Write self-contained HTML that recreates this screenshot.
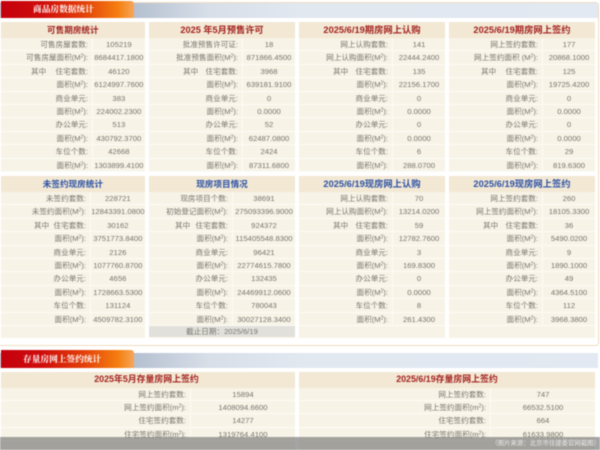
<!DOCTYPE html>
<html lang="zh">
<head>
<meta charset="utf-8">
<style>
html,body{margin:0;padding:0;width:600px;height:450px;overflow:hidden;background:#fff}
#w{position:absolute;left:0;top:0;width:600px;height:450px;overflow:hidden;filter:blur(.45px);font-family:"Liberation Sans","Noto Sans CJK SC",sans-serif;font-size:7.6px;color:#77746d;background:#fff}
.box{position:absolute;left:-4px;top:2px;width:601px;height:342px;border:1px solid #f0dcc0;border-radius:3px;background:#fff}
.box2{position:absolute;left:-4px;top:352px;width:601px;height:120px;background:#fff}
.sb{position:absolute;left:0;width:598px;height:15px;background:linear-gradient(90deg,#b4c0d0 134px,#d8dfe9 210px,#e2e8f0 300px,#e3e9f2)}
.sh{position:absolute;left:1px;width:133px;height:17px;border-radius:0 3px 0 0;background:linear-gradient(90deg,#c4000e 0,#cf0c0c 30%,#e2400a 62%,#f57f10 88%,#f6a65a 100%);color:#fff;font-weight:bold;font-family:"Liberation Serif","Noto Serif CJK SC",serif;font-size:8.7px;line-height:17px}
.p{position:absolute;width:146px;background:#f7f3e7}
.h{height:16px;line-height:16px;background:#f2e8d4;text-align:center;font-weight:bold;font-size:8.6px;color:#a4221f}
.b .h{color:#2c51a3}
.r{position:relative;display:flex;height:13.4px;line-height:13px;box-sizing:border-box;border-bottom:1px solid #fdfbf4}
.l{box-sizing:border-box;padding-right:4px;text-align:right;white-space:nowrap;border-right:1px solid #fdfbf4;flex:none}
.v{flex:1;text-align:center;white-space:nowrap;font-size:7.7px}
.a .l{width:94px}.c .l{width:90px}.d .l{width:84px}
.q{position:absolute;top:0}
sup{font-size:5px;line-height:0;vertical-align:2.5px}
.e{height:11px;line-height:11px;background:#e2e0da;text-align:center;margin-top:0}
.w{width:296px}
.w .h{height:15.5px;line-height:15.5px}
.w .l{width:190px;padding-right:4px}
#o{position:absolute;left:0;top:437px;width:600px;height:13px;background:rgba(110,110,110,.62);color:#e8e8e8;font-size:6.4px;line-height:14px;text-align:right;padding-right:0;box-sizing:border-box}
</style>
</head>
<body>
<div id="w">
<div class="box"></div>
<div class="box2"></div>
<div class="sb" style="top:3px"></div>
<div class="sh" style="top:1px;padding-left:32px;width:101px">商品房数据统计</div>

<div class="p a" style="left:1px;top:22px;width:143.7px;height:150px">
<div class="h">可售期房统计</div>
<div class="r" style="height:13.4px"><div class="l" style="width:92px">可售房屋套数:</div><div class="v">105219</div></div>
<div class="r"><div class="l" style="width:92px">可售房屋面积(M<sup>2</sup>):</div><div class="v">8684417.1800</div></div>
<div class="r"><span class="q" style="left:30px">其中</span><div class="l" style="width:92px">住宅套数:</div><div class="v">46120</div></div>
<div class="r"><div class="l" style="width:92px">面积(M<sup>2</sup>):</div><div class="v">6124997.7600</div></div>
<div class="r"><div class="l" style="width:92px">商业单元:</div><div class="v">383</div></div>
<div class="r"><div class="l" style="width:92px">面积(M<sup>2</sup>):</div><div class="v">224002.2300</div></div>
<div class="r"><div class="l" style="width:92px">办公单元:</div><div class="v">513</div></div>
<div class="r"><div class="l" style="width:92px">面积(M<sup>2</sup>):</div><div class="v">430792.3700</div></div>
<div class="r"><div class="l" style="width:92px">车位个数:</div><div class="v">42668</div></div>
<div class="r"><div class="l" style="width:92px">面积(M<sup>2</sup>):</div><div class="v">1303899.4100</div></div>
</div>

<div class="p a" style="left:149px;top:22px;height:150px">
<div class="h" style="font-size:9.2px">2025 年5月预售许可</div>
<div class="r"><div class="l">批准预售许可证:</div><div class="v">18</div></div>
<div class="r"><div class="l">批准预售面积(M<sup>2</sup>):</div><div class="v">871866.4500</div></div>
<div class="r"><span class="q" style="left:34px">其中</span><div class="l">住宅套数:</div><div class="v">3968</div></div>
<div class="r"><div class="l">面积(M<sup>2</sup>):</div><div class="v">639181.9100</div></div>
<div class="r"><div class="l">商业单元:</div><div class="v">0</div></div>
<div class="r"><div class="l">面积(M<sup>2</sup>):</div><div class="v">0.0000</div></div>
<div class="r"><div class="l">办公单元:</div><div class="v">52</div></div>
<div class="r"><div class="l">面积(M<sup>2</sup>):</div><div class="v">62487.0800</div></div>
<div class="r"><div class="l">车位个数:</div><div class="v">2424</div></div>
<div class="r"><div class="l">面积(M<sup>2</sup>):</div><div class="v">87311.6800</div></div>
</div>

<div class="p a" style="left:299px;top:22px;height:150px">
<div class="h" style="font-size:9.3px">2025/6/19期房网上认购</div>
<div class="r"><div class="l">网上认购套数:</div><div class="v">141</div></div>
<div class="r"><div class="l">网上认购面积(M<sup>2</sup>):</div><div class="v">22444.2400</div></div>
<div class="r"><span class="q" style="left:34px">其中</span><div class="l">住宅套数:</div><div class="v">135</div></div>
<div class="r"><div class="l">面积(M<sup>2</sup>):</div><div class="v">22156.1700</div></div>
<div class="r"><div class="l">商业单元:</div><div class="v">0</div></div>
<div class="r"><div class="l">面积(M<sup>2</sup>):</div><div class="v">0.0000</div></div>
<div class="r"><div class="l">办公单元:</div><div class="v">0</div></div>
<div class="r"><div class="l">面积(M<sup>2</sup>):</div><div class="v">0.0000</div></div>
<div class="r"><div class="l">车位个数:</div><div class="v">6</div></div>
<div class="r"><div class="l">面积(M<sup>2</sup>):</div><div class="v">288.0700</div></div>
</div>

<div class="p a" style="left:449px;top:22px;height:150px">
<div class="h" style="font-size:9.3px">2025/6/19期房网上签约</div>
<div class="r"><div class="l">网上签约套数:</div><div class="v">177</div></div>
<div class="r"><div class="l">网上签约面积 (M<sup>2</sup>):</div><div class="v">20868.1000</div></div>
<div class="r"><span class="q" style="left:32px">其中</span><div class="l">住宅套数:</div><div class="v">125</div></div>
<div class="r"><div class="l">面积(M<sup>2</sup>):</div><div class="v">19725.4200</div></div>
<div class="r"><div class="l">商业单元:</div><div class="v">0</div></div>
<div class="r"><div class="l">面积(M<sup>2</sup>):</div><div class="v">0.0000</div></div>
<div class="r"><div class="l">办公单元:</div><div class="v">0</div></div>
<div class="r"><div class="l">面积(M<sup>2</sup>):</div><div class="v">0.0000</div></div>
<div class="r"><div class="l">车位个数:</div><div class="v">29</div></div>
<div class="r"><div class="l">面积(M<sup>2</sup>):</div><div class="v">819.6300</div></div>
</div>

<div class="p c b" style="left:1px;top:176px;width:143.7px;height:162px">
<div class="h">未签约现房统计</div>
<div class="r"><div class="l">未签约套数:</div><div class="v">228721</div></div>
<div class="r"><div class="l">未签约面积(M<sup>2</sup>):</div><div class="v">12843391.0800</div></div>
<div class="r"><span class="q" style="left:33px">其中</span><div class="l">住宅套数:</div><div class="v">30162</div></div>
<div class="r"><div class="l">面积(M<sup>2</sup>):</div><div class="v">3751773.8400</div></div>
<div class="r"><div class="l">商业单元:</div><div class="v">2126</div></div>
<div class="r"><div class="l">面积(M<sup>2</sup>):</div><div class="v">1077760.8700</div></div>
<div class="r"><div class="l">办公单元:</div><div class="v">4656</div></div>
<div class="r"><div class="l">面积(M<sup>2</sup>):</div><div class="v">1728663.5300</div></div>
<div class="r"><div class="l">车位个数:</div><div class="v">131124</div></div>
<div class="r"><div class="l">面积(M<sup>2</sup>):</div><div class="v">4509782.3100</div></div>
</div>

<div class="p d b" style="left:149px;top:176px;height:162px">
<div class="h">现房项目情况</div>
<div class="r"><div class="l">现房项目个数:</div><div class="v">38691</div></div>
<div class="r"><div class="l">初始登记面积(M<sup>2</sup>):</div><div class="v">275093396.9000</div></div>
<div class="r"><span class="q" style="left:26px">其中</span><div class="l">住宅套数:</div><div class="v">924372</div></div>
<div class="r"><div class="l">面积(M<sup>2</sup>):</div><div class="v">115405548.8300</div></div>
<div class="r"><div class="l">商业单元:</div><div class="v">96421</div></div>
<div class="r"><div class="l">面积(M<sup>2</sup>):</div><div class="v">22774615.7800</div></div>
<div class="r"><div class="l">办公单元:</div><div class="v">132435</div></div>
<div class="r"><div class="l">面积(M<sup>2</sup>):</div><div class="v">24469912.0600</div></div>
<div class="r"><div class="l">车位个数:</div><div class="v">780043</div></div>
<div class="r"><div class="l">面积(M<sup>2</sup>):</div><div class="v">30027128.3400</div></div>
<div class="e">截止日期：2025/6/19</div>
</div>

<div class="p a b" style="left:299px;top:176px;height:162px">
<div class="h" style="font-size:9.3px">2025/6/19现房网上认购</div>
<div class="r"><div class="l">网上认购套数:</div><div class="v">70</div></div>
<div class="r"><div class="l">网上认购面积(M<sup>2</sup>):</div><div class="v">13214.0200</div></div>
<div class="r"><span class="q" style="left:34px">其中</span><div class="l">住宅套数:</div><div class="v">59</div></div>
<div class="r"><div class="l">面积(M<sup>2</sup>):</div><div class="v">12782.7600</div></div>
<div class="r"><div class="l">商业单元:</div><div class="v">3</div></div>
<div class="r"><div class="l">面积(M<sup>2</sup>):</div><div class="v">169.8300</div></div>
<div class="r"><div class="l">办公单元:</div><div class="v">0</div></div>
<div class="r"><div class="l">面积(M<sup>2</sup>):</div><div class="v">0.0000</div></div>
<div class="r"><div class="l">车位个数:</div><div class="v">8</div></div>
<div class="r"><div class="l">面积(M<sup>2</sup>):</div><div class="v">261.4300</div></div>
</div>

<div class="p a b" style="left:449px;top:176px;height:162px">
<div class="h" style="font-size:9.3px">2025/6/19现房网上签约</div>
<div class="r"><div class="l">网上签约套数:</div><div class="v">260</div></div>
<div class="r"><div class="l">网上签约面积(M<sup>2</sup>):</div><div class="v">18105.3300</div></div>
<div class="r"><span class="q" style="left:34px">其中</span><div class="l">住宅套数:</div><div class="v">36</div></div>
<div class="r"><div class="l">面积(M<sup>2</sup>):</div><div class="v">5490.0200</div></div>
<div class="r"><div class="l">商业单元:</div><div class="v">9</div></div>
<div class="r"><div class="l">面积(M<sup>2</sup>):</div><div class="v">1890.1000</div></div>
<div class="r"><div class="l">办公单元:</div><div class="v">49</div></div>
<div class="r"><div class="l">面积(M<sup>2</sup>):</div><div class="v">4364.5100</div></div>
<div class="r"><div class="l">车位个数:</div><div class="v">112</div></div>
<div class="r"><div class="l">面积(M<sup>2</sup>):</div><div class="v">3968.3800</div></div>
</div>

<div class="sb" style="top:353px"></div>
<div class="sh" style="top:350px;height:18px;line-height:18px;padding-left:22px;width:111px">存量房网上签约统计</div>

<div class="p w" style="left:1px;top:372px;width:294px;height:78px">
<div class="h" style="font-size:8.9px;padding-right:3px">2025年5月存量房网上签约</div>
<div class="r"><div class="l">网上签约套数:</div><div class="v">15894</div></div>
<div class="r"><div class="l">网上签约面积(m<sup>2</sup>):</div><div class="v">1408094.6600</div></div>
<div class="r"><div class="l">住宅签约套数:</div><div class="v">14277</div></div>
<div class="r"><div class="l">住宅签约面积(m<sup>2</sup>):</div><div class="v">1319764.4100</div></div>
</div>

<div class="p w" style="left:299px;top:372px;height:78px">
<div class="h" style="font-size:8.9px">2025/6/19存量房网上签约</div>
<div class="r"><div class="l" style="width:192px">网上签约套数:</div><div class="v">747</div></div>
<div class="r"><div class="l" style="width:192px">网上签约面积(m<sup>2</sup>):</div><div class="v">66532.5100</div></div>
<div class="r"><div class="l" style="width:192px">住宅签约套数:</div><div class="v">664</div></div>
<div class="r"><div class="l" style="width:192px">住宅签约面积(m<sup>2</sup>):</div><div class="v">61633.9800</div></div>
</div>

<div id="o">（图片来源：北京市住建委官网截图）</div>
</div>
</body>
</html>
